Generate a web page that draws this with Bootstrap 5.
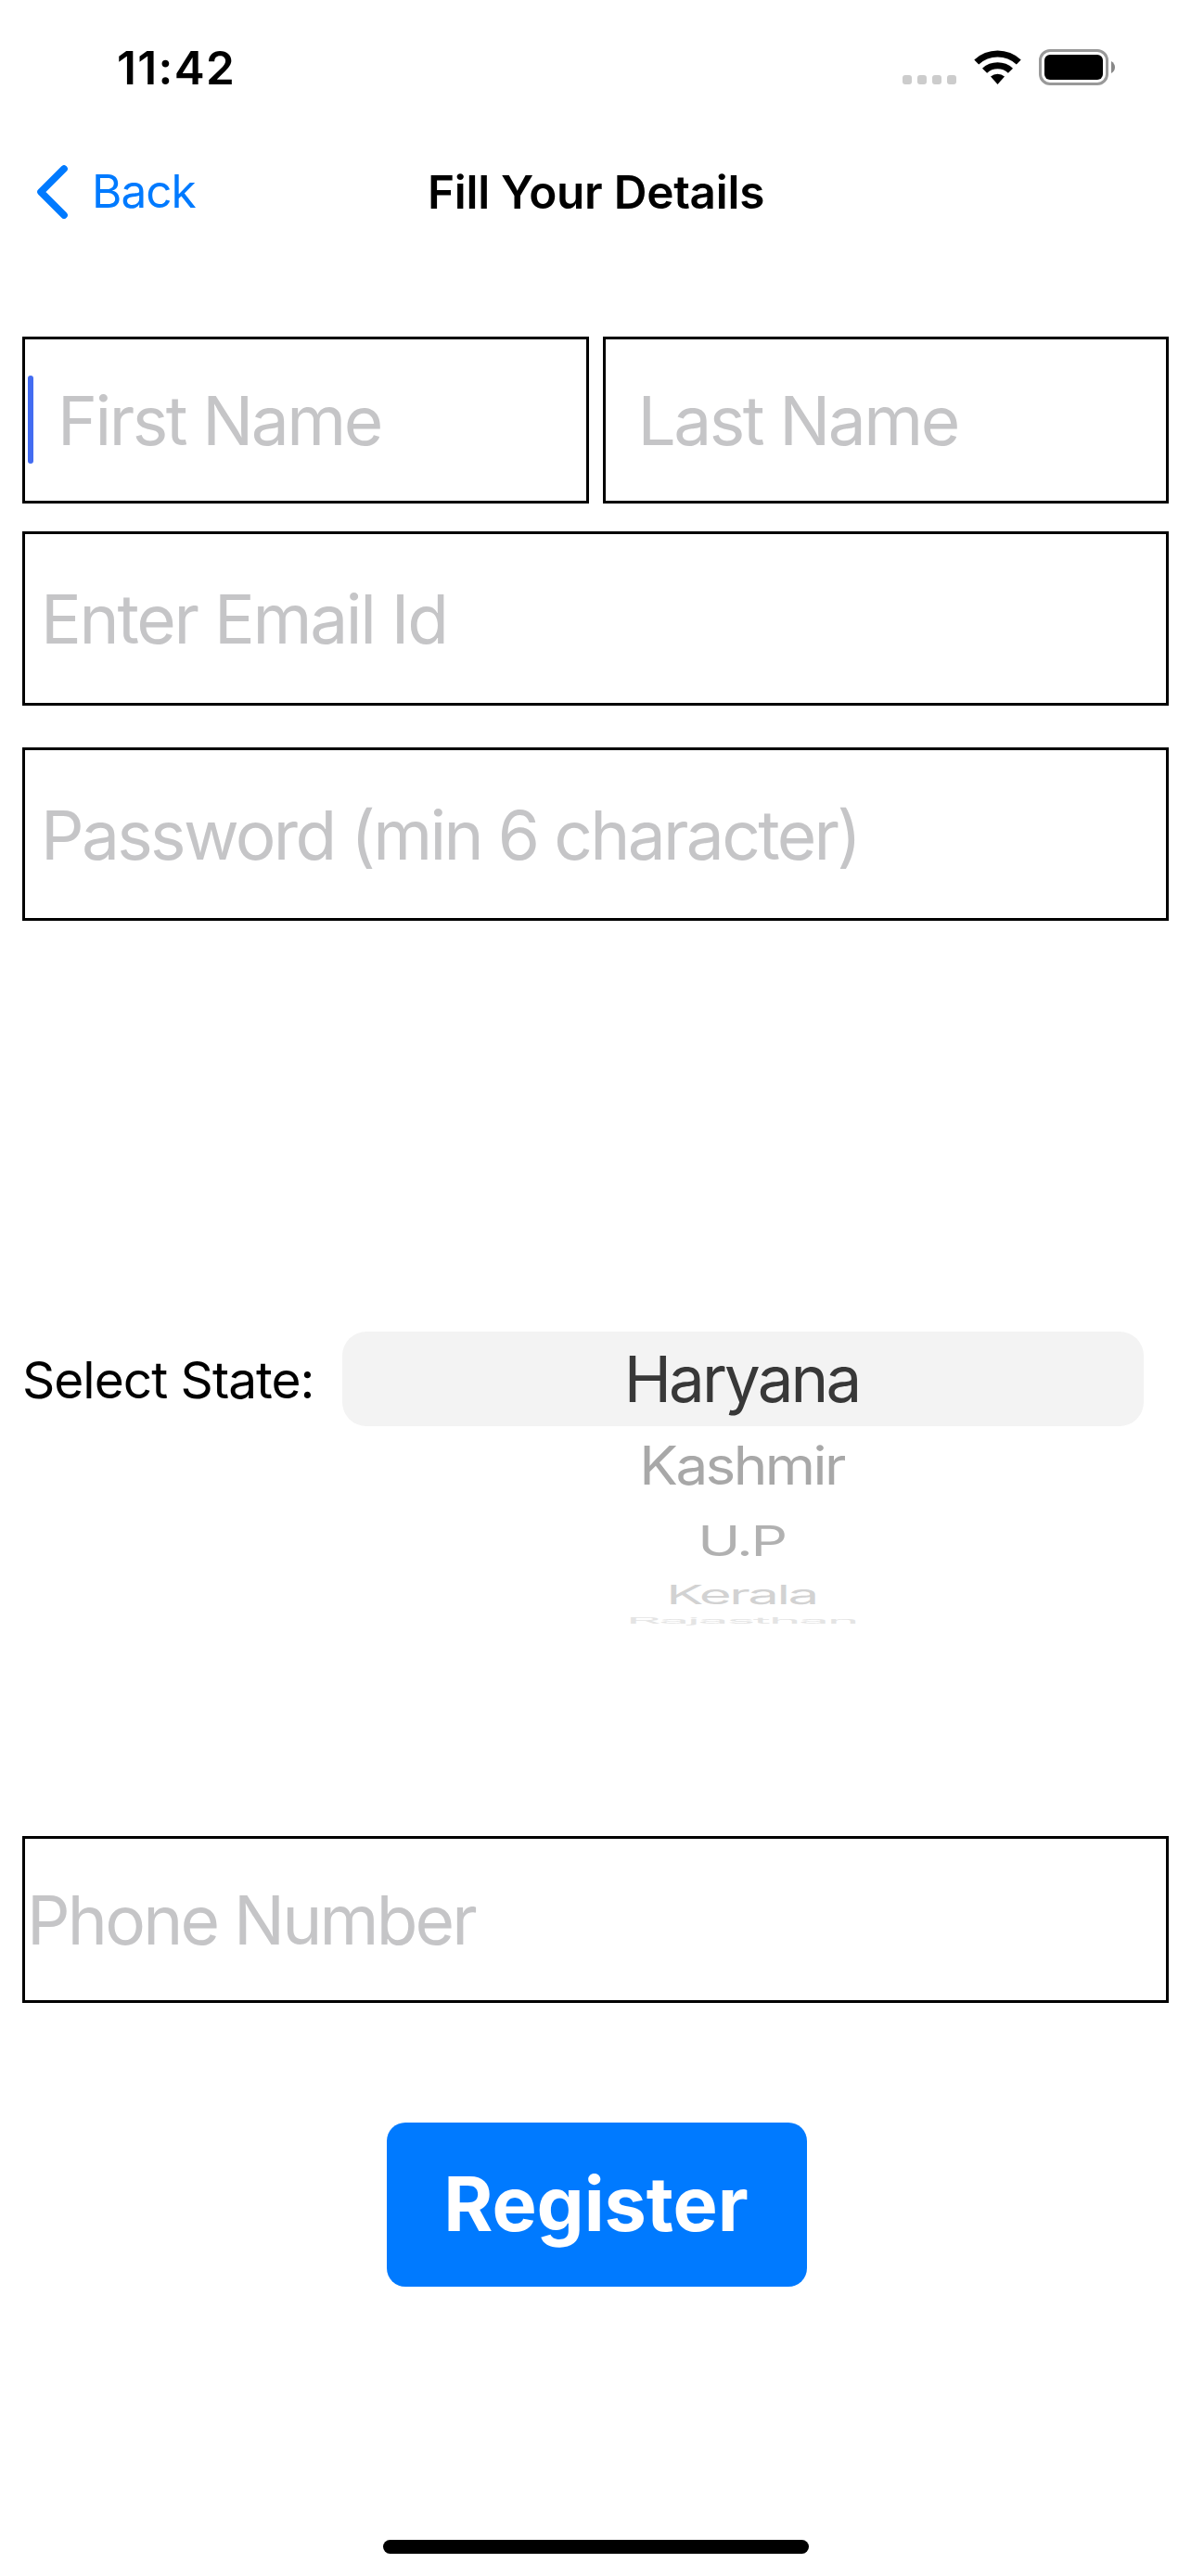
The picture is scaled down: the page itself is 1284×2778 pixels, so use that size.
<!DOCTYPE html>
<html lang="en">
<head>
<meta charset="utf-8">
<meta name="viewport" content="width=device-width, initial-scale=1">
<title>Fill Your Details</title>
<link href="https://cdn.jsdelivr.net/npm/bootstrap@5.3.0/dist/css/bootstrap.min.css" rel="stylesheet">
<style>
  body { font-family: Inter, Roboto, sans-serif; color: #000; background: #fff; }
  .screen { width: 1284px; height: 2778px; overflow: hidden; }
  .status-bar { height: 146px; padding-left: 126px; padding-right: 82px; }
  .clock { font-size: 49.5px; font-weight: 600; line-height: 1; letter-spacing: 1.35px; padding-top: 1px; }
  .top-nav { height: 122px; padding: 0 38px 0 39px; }
  .back-link { font-size: 49.5px; line-height: 1; letter-spacing: -1px; color: #007aff; gap: 26px; }
  .page-title { font-size: 49.5px; font-weight: 600; line-height: 1; letter-spacing: -.27px; padding-top: 1px; }
  .form-body { padding: 95px 24px 0; }
  .name-row { gap: 15px; margin-bottom: 30px; }
  .form-control.field {
    height: 180px; border: 3px solid #000; border-radius: 0; background: #fff;
    padding: 0 17px; font-size: 73px; line-height: 1.2; letter-spacing: -2.68px; color: #000;
  }
  .form-control.field::placeholder { color: #c5c5c7; opacity: 1; }
  .form-control.field-name { padding-left: 35px; letter-spacing: -2.5px; }
  .form-control.field-email { height: 188px; margin-bottom: 45px; letter-spacing: -2.3px; }
  .form-control.field-pass { height: 187px; padding-top: 2px; }
  .form-control.field-phone { padding-left: 2px; letter-spacing: -2.8px; }
  .caret { position: absolute; left: 6px; top: 42px; width: 6px; height: 95px; border-radius: 3px; background: #436cf1; }
  .state-row { margin-top: 443px; height: 544px; }
  .state-label { width: 345px; height: 102px; padding-top: 2px; font-size: 55px; line-height: 1; letter-spacing: -1px; white-space: nowrap; }
  .wheel { width: 864px; }
  .wheel-item { line-height: 1; white-space: nowrap; padding-right: 3px; }
  .wheel-selected { height: 102px; border-radius: 26px; background: #f3f3f3; color: #383838; font-size: 69px; letter-spacing: -2.87px; }
  .wheel-1 { height: 86px; font-size: 62px; letter-spacing: -2.6px; color: #a8a8a8; transform: scaleY(.92); }
  .wheel-2 { height: 76px; font-size: 62px; letter-spacing: -2.4px; color: #b1b1b1; transform: scaleY(.72); }
  .wheel-3 { height: 39px; font-size: 60px; letter-spacing: -2.5px; color: #d2d2d2; transform: scaleY(.475); }
  .wheel-4 { height: 18px; font-size: 59px; letter-spacing: -2.5px; color: #e4e4e4; transform: scaleY(.15); }
  .btn.btn-register {
    width: 453px; height: 177px; margin-top: 129px; margin-left: 3px; border: 0; border-radius: 20px; padding: 0 2px 0 0;
    background: #007aff; color: #fff; font-size: 81px; font-weight: 700; line-height: 1; letter-spacing: -.1px;
  }
  .home-bar { width: 459px; height: 15px; margin-bottom: 24px; border-radius: 8px; background: #000; }
</style>
</head>
<body>
<div class="screen d-flex flex-column">
  <header class="status-bar d-flex align-items-center justify-content-between flex-shrink-0">
    <span class="clock">11:42</span>
    <svg width="230" height="40" viewBox="972 53 230 40" aria-hidden="true">
      <g fill="#ccc">
        <rect x="973" y="81" width="10" height="10" rx="3"/>
        <rect x="989" y="81" width="10" height="10" rx="3"/>
        <rect x="1005" y="81" width="10" height="10" rx="3"/>
        <rect x="1021" y="81" width="10" height="10" rx="3"/>
      </g>
      <path d="M1050.3 64.5a36.500 36.500 0 0 1 50.400 0l-4.900 5.100a29.500 29.500 0 0 0-40.600 0z"/>
      <path d="M1059 73.700a24 24 0 0 1 33 0l-5.100 5.100a16.800 16.800 0 0 0-22.800 0z"/>
      <path d="M1068 82.600a11.300 11.300 0 0 1 15 0l-7.500 8.400z"/>
      <rect x="1121.500" y="54.500" width="72" height="36" rx="10.500" fill="none" stroke="#999" stroke-width="3"/>
      <rect x="1126" y="59" width="63" height="27" rx="6"/>
      <path d="M1198 66q4 2.500 4 6.500t-4 6.500z" fill="#888"/>
    </svg>
  </header>

  <nav class="top-nav row g-0 align-items-center flex-shrink-0">
    <div class="col d-flex">
      <a href="#" class="back-link d-flex align-items-center text-decoration-none">
        <svg width="34" height="58" viewBox="0 0 34 58" fill="none" stroke="#007aff" stroke-width="7.600" stroke-linecap="round" stroke-linejoin="round" aria-hidden="true"><path d="M30 4 5 29l25 25"/></svg>
        <span>Back</span>
      </a>
    </div>
    <div class="col-auto page-title">Fill Your Details</div>
    <div class="col"></div>
  </nav>

  <form class="form-body d-flex flex-column flex-grow-1">
    <div class="name-row d-flex">
      <div class="position-relative flex-fill">
        <input type="text" class="form-control field field-name" placeholder="First Name">
        <span class="caret"></span>
      </div>
      <div class="flex-fill">
        <input type="text" class="form-control field field-name" placeholder="Last Name">
      </div>
    </div>
    <input type="email" class="form-control field field-email" placeholder="Enter Email Id">
    <input type="password" class="form-control field field-pass" placeholder="Password (min 6 character)">

    <div class="state-row d-flex align-items-start">
      <div class="state-label d-flex align-items-center">Select State:</div>
      <div class="wheel text-center">
        <div class="wheel-item wheel-selected d-flex align-items-center justify-content-center">Haryana</div>
        <div class="wheel-item wheel-1 d-flex align-items-center justify-content-center">Kashmir</div>
        <div class="wheel-item wheel-2 d-flex align-items-center justify-content-center">U.P</div>
        <div class="wheel-item wheel-3 d-flex align-items-center justify-content-center">Kerala</div>
        <div class="wheel-item wheel-4 d-flex align-items-center justify-content-center">Rajasthan</div>
      </div>
    </div>

    <input type="tel" class="form-control field field-phone" placeholder="Phone Number">
    <button type="button" class="btn btn-register align-self-center">Register</button>
  </form>

  <div class="home-bar mx-auto flex-shrink-0"></div>
</div>
<script src="https://cdn.jsdelivr.net/npm/bootstrap@5.3.0/dist/js/bootstrap.bundle.min.js"></script>
</body>
</html>
